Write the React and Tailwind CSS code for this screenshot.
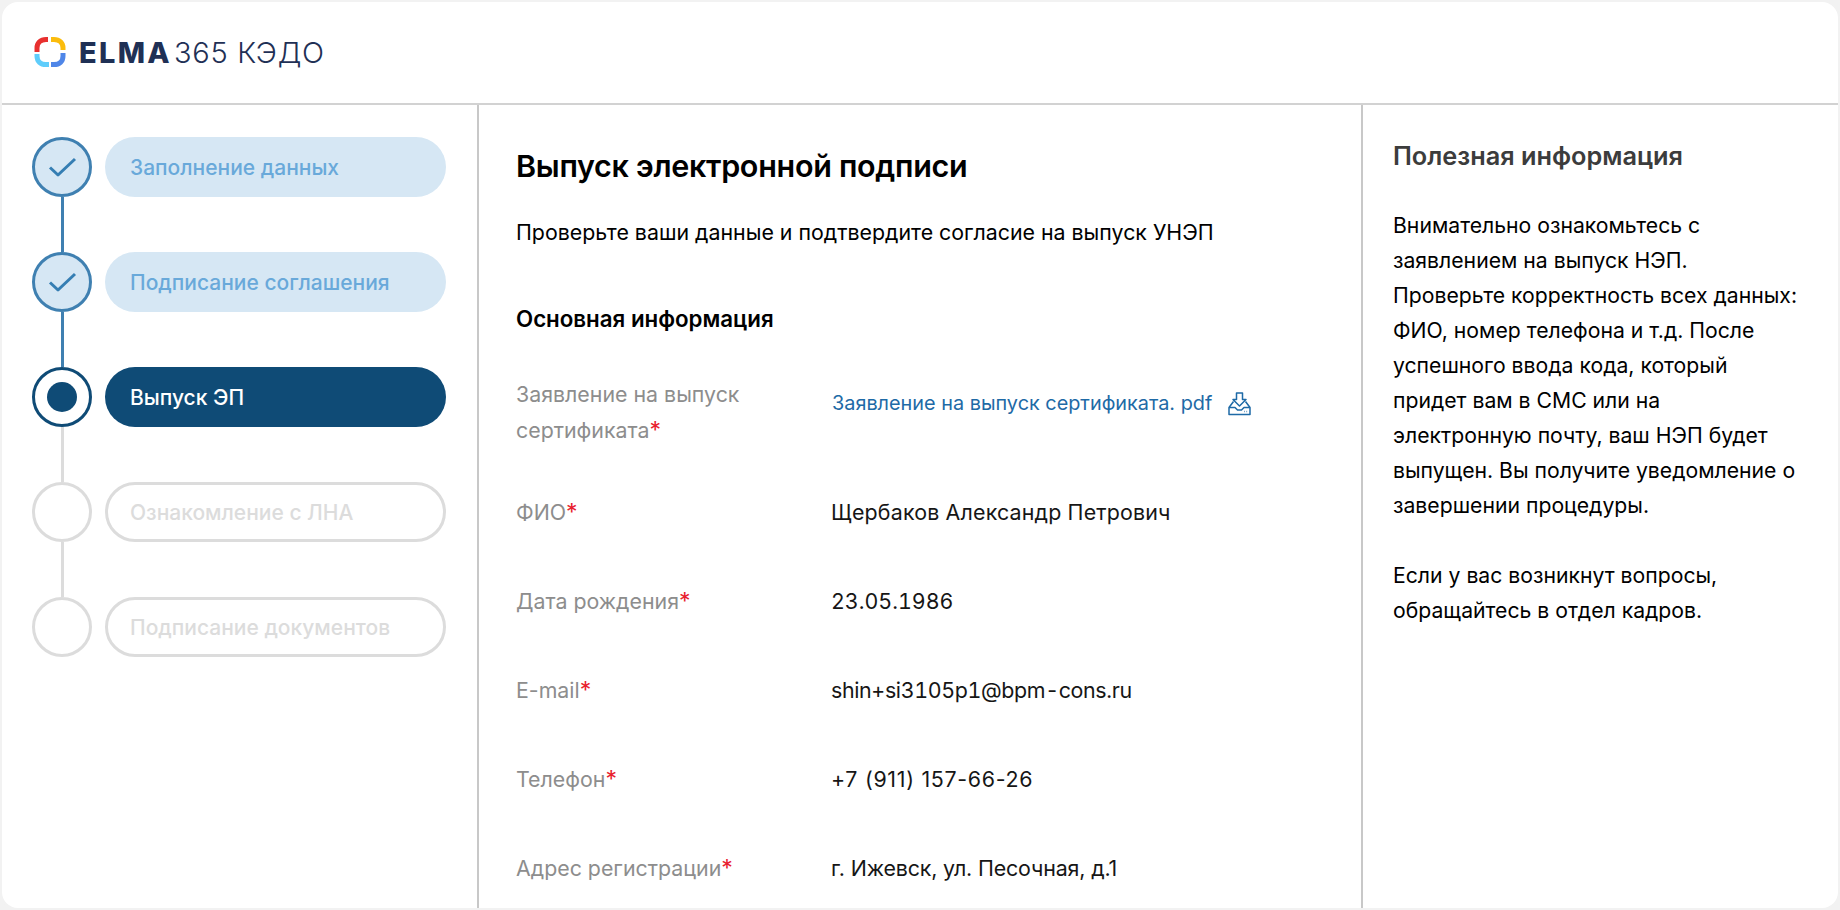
import React from "react";

const steps = [
  { label: "Заполнение данных", state: "done" },
  { label: "Подписание соглашения", state: "done" },
  { label: "Выпуск ЭП", state: "current" },
  { label: "Ознакомление с ЛНА", state: "todo" },
  { label: "Подписание документов", state: "todo" },
];

const rows = [
  { label: "ФИО", value: "Щербаков Александр Петрович", cls: "tracking-[0.17px]" },
  { label: "Дата рождения", value: "23.05.1986", cls: "tabular-nums" },
  { label: "E-mail", value: "shin+si3105p1@bpm-cons.ru", cls: "tabular-nums tracking-[-0.35px]" },
  { label: "Телефон", value: "+7 (911) 157-66-26", cls: "tracking-[0.7px]" },
  { label: "Адрес регистрации", value: "г. Ижевск, ул. Песочная, д.1", cls: "tracking-[-0.15px]" },
];

function Logo() {
  return (
    <svg width="32" height="32" viewBox="0 0 32 32" fill="none" strokeWidth="5">
      <path d="M14 3.5 H12 C6.5 3.5 3 7 3 12 V16" stroke="#e8302f" />
      <path d="M17 3.5 H20 C25.5 3.5 29 7 29 12 V14" stroke="#fbbc0d" />
      <path d="M29 17 V20 C29 25.5 25.5 28.5 20 28.5 H17" stroke="#4f86e8" />
      <path d="M3 18 V20 C3 25.5 6.5 28.5 12 28.5 H15" stroke="#5fcdfb" />
    </svg>
  );
}

function Check() {
  return (
    <svg width="29" height="21" viewBox="0 0 29 21" fill="none">
      <path d="M2 10.5 L10 18 L27 2" stroke="#357eb3" strokeWidth="3" strokeLinejoin="round" />
    </svg>
  );
}

function DownloadIcon() {
  return (
    <svg width="23" height="24" viewBox="0 0 23 24" fill="none" stroke="#1e6aa6" strokeWidth="1.5" strokeLinejoin="round">
      <path d="M8.5 1 H14.5 V7.5 H18 L11.5 14 L5 7.5 H8.5 Z" />
      <path d="M5.5 9.5 L1 15.5 V22.5 H22 V15.5 L17.5 9.5" />
      <path d="M1 15.5 H7 L9.5 18 H13.5 L16 15.5 H22" />
      <path d="M16 19.5 H16.6 M18.5 19.5 H19.1" />
    </svg>
  );
}

function Step({ step, last }) {
  const { label, state } = step;
  const lineColor = state === "done" ? "bg-[#3f80b1]" : "bg-[#dcdcdc]";
  return (
    <div className="flex flex-col">
      <div className="flex items-center gap-[13px]">
        {state === "done" && (
          <div className="w-[60px] h-[60px] rounded-full border-[3px] border-[#3f80b1] bg-[#d6e7f4] flex items-center justify-center">
            <Check />
          </div>
        )}
        {state === "current" && (
          <div className="w-[60px] h-[60px] rounded-full border-[3px] border-[#0f4b76] bg-white flex items-center justify-center">
            <div className="w-[30px] h-[30px] rounded-full bg-[#0f4b76]" />
          </div>
        )}
        {state === "todo" && <div className="w-[60px] h-[60px] rounded-full border-[3px] border-[#dcdcdc] bg-white" />}
        {state === "done" && (
          <div className="w-[341px] h-[60px] rounded-full bg-[#d6e7f4] flex items-center pl-[25px] pt-[2px] text-[21px] font-medium text-[#69a9da]">
            {label}
          </div>
        )}
        {state === "current" && (
          <div className="w-[341px] h-[60px] rounded-full bg-[#0f4b76] flex items-center pl-[25px] pt-[2px] text-[21px] font-medium text-white">
            {label}
          </div>
        )}
        {state === "todo" && (
          <div className="w-[341px] h-[60px] rounded-full border-[3px] border-[#dcdcdc] flex items-center pl-[22px] pt-[2px] text-[21px] font-medium text-[#dcdcdc]">
            {label}
          </div>
        )}
      </div>
      {!last && <div className={`w-[3px] h-[55px] ml-[29px] ${lineColor}`} />}
    </div>
  );
}

function Label({ text }) {
  return (
    <span>
      {text}
      <span className="text-[#e8212e] text-[23px]">*</span>
    </span>
  );
}

export default function App() {
  return (
    <div className="h-[910px] w-[1840px] bg-[#f2f2f2] overflow-hidden font-['Inter',sans-serif]">
      <div className="h-full rounded-[18px] bg-white border-2 border-[#f2f2f2] flex flex-col overflow-hidden">
        <header className="h-[103px] shrink-0 border-b-2 border-[#d2d2d2] flex items-center pl-[32px] pb-[2px]">
          <Logo />
          <div className="ml-[13px] pt-[2px] flex items-baseline text-[#1f3055] text-[29px]">
            <span className="font-extrabold tracking-[2.3px]">ELMA</span>
            <span className="ml-[2px] font-light tracking-[0.7px]">365 КЭДО</span>
          </div>
        </header>
        <div className="flex flex-1 min-h-0">
          <aside className="w-[477px] shrink-0 border-r-2 border-[#c8c8c8] pl-[30px] pt-[32px]">
            {steps.map((s, i) => (
              <Step key={s.label} step={s} last={i === steps.length - 1} />
            ))}
          </aside>
          <main className="w-[884px] shrink-0 border-r-2 border-[#c8c8c8] pl-[37px] pt-[42px] text-[21.35px] text-[#161616] overflow-hidden">
            <h1 className="text-[30.5px] leading-[38px] font-semibold tracking-[-0.3px] text-black">Выпуск электронной подписи</h1>
            <p className="mt-[31px] leading-[32px] text-black">Проверьте ваши данные и подтвердите согласие на выпуск УНЭП</p>
            <h2 className="mt-[55px] text-[22.3px] leading-[32px] font-semibold text-black">Основная информация</h2>
            <div className="mt-[41px] flex">
              <div className="w-[315px] leading-[36px] text-[#8d8d8d]">
                Заявление на выпуск
                <br />
                <Label text="сертификата" />
              </div>
              <div className="flex items-center gap-[16px] h-[36px] mt-[10px] ml-[1px] text-[19.85px] text-[#1e6aa6]">
                <span>Заявление на выпуск сертификата. pdf</span>
                <DownloadIcon />
              </div>
            </div>
            <div className="mt-[46px] flex flex-col gap-[53px]">
              {rows.map((r) => (
                <div key={r.label} className="flex h-[36px] leading-[36px]">
                  <div className="w-[315px] text-[#8d8d8d]">
                    <Label text={r.label} />
                  </div>
                  <div className={`text-[21.4px] ${r.cls}`}>{r.value}</div>
                </div>
              ))}
            </div>
          </main>
          <section className="flex-1 pl-[30px] pr-[20px] pt-[33px] text-[21.2px] text-black">
            <h2 className="text-[25.3px] leading-[36px] font-semibold text-[#3c3c3c]">Полезная информация</h2>
            <p className="mt-[34px] leading-[35px]">
              Внимательно ознакомьтесь с
              <br />
              заявлением на выпуск НЭП.
              <br />
              Проверьте корректность всех данных:
              <br />
              ФИО, номер телефона и т.д. После
              <br />
              успешного ввода кода, который
              <br />
              придет вам в СМС или на
              <br />
              электронную почту, ваш НЭП будет
              <br />
              выпущен. Вы получите уведомление о
              <br />
              завершении процедуры.
            </p>
            <p className="mt-[35px] leading-[35px]">
              Если у вас возникнут вопросы,
              <br />
              обращайтесь в отдел кадров.
            </p>
          </section>
        </div>
      </div>
    </div>
  );
}
